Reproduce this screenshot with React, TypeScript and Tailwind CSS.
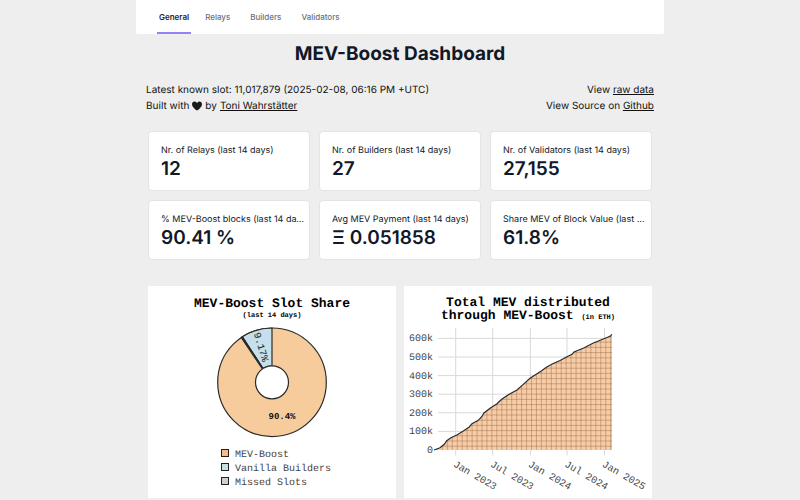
import React from "react";

const tabs = ["General", "Relays", "Builders", "Validators"];

const stats = [
  { label: "Nr. of Relays (last 14 days)", value: "12" },
  { label: "Nr. of Builders (last 14 days)", value: "27" },
  { label: "Nr. of Validators (last 14 days)", value: "27,155" },
  { label: "% MEV-Boost blocks (last 14 days)", value: "90.41 %" },
  { label: "Avg MEV Payment (last 14 days)", value: "Ξ 0.051858" },
  { label: "Share MEV of Block Value (last 14 days)", value: "61.8%" },
];

const mono = "'Courier New', 'Liberation Mono', monospace";

function SlotShare() {
  return (
    <svg viewBox="0 38 248 174" className="block w-full" fontFamily={mono} role="img" aria-label="MEV-Boost Slot Share">
      <g stroke="#2b2b2b" strokeWidth="1.2">
        <circle cx="124" cy="96.3" r="54.3" fill="#f7cc9c" />
        <path d="M94.4 50.8 L115 82.5 A16.5 16.5 0 0 1 124 79.8 L124 42 A54.3 54.3 0 0 0 94.4 50.8Z" fill="#c5dfeb" />
        <path d="M93.2 51.5 L114.5 83 L115 82.5 L94.4 50.8Z" fill="#222" />
        <circle cx="124" cy="96.3" r="16.5" fill="#fff" />
      </g>
      <text x="134" y="133" fontSize="9" fontWeight="700" textAnchor="middle" fill="#111">90.4%</text>
      <text transform="translate(113 61) rotate(73)" fontSize="10" y="3" textAnchor="middle" fill="#222">9.17%</text>
      <g fontSize="10" fill="#444">
        <rect x="73.5" y="163.5" width="7" height="7" fill="#f7bd85" stroke="#222" />
        <rect x="73.5" y="177.5" width="7" height="7" fill="#c9dfe8" stroke="#222" />
        <rect x="73.5" y="191.5" width="7" height="7" fill="#cfcfcf" stroke="#222" />
        <text x="87" y="171">MEV-Boost</text>
        <text x="87" y="185">Vanilla Builders</text>
        <text x="87" y="199">Missed Slots</text>
      </g>
    </svg>
  );
}

const curve =
  "M30 164 L36 161.7 L40.3 158.3 L42.7 154.7 L47 151.7 L53.3 148.7 L59.3 145 L65.3 141 L68 137.7 L74.3 134.3 L77.7 130.7 L80 127 L86 122.3 L92.7 118 L97.7 113.3 L104.3 108.7 L113 104 L119 98.6 L126 92.3 L137.7 84.7 L142 81.5 L147.7 78.3 L156 74.5 L163 70.7 L168 68.3 L170 66 L180.3 61.7 L189.3 57 L199.3 53 L206 50.3 L208 48.3";

const months = [
  { x: 51.7, label: "Jan 2023" },
  { x: 88.7, label: "Jul 2023" },
  { x: 126.4, label: "Jan 2024" },
  { x: 163, label: "Jul 2024" },
  { x: 200.5, label: "Jan 2025" },
];

function TotalMev() {
  return (
    <svg viewBox="0 38 248 174" className="block w-full" fontFamily={mono} role="img" aria-label="Total MEV distributed through MEV-Boost">
      <defs>
        <clipPath id="area"><path d={curve + " L208 164Z"} /></clipPath>
      </defs>
      {[1, 2, 3, 4, 5, 6].map((n) => (
        <path key={n} d={`M34 ${164 - n * 18.6}H208`} stroke="#d9d9d9" strokeWidth="1" />
      ))}
      {months.map((m) => (
        <path key={m.label} d={`M${m.x} 42V169.500`} stroke="#d9d9d9" strokeWidth="1" />
      ))}
      <path d={curve + " L208 164Z"} fill="#f6cda9" />
      <g clipPath="url(#area)" stroke="#a0683e" strokeOpacity="0.5" strokeWidth="0.9">
        {Array.from({ length: 37 }, (_, i) => (
          <path key={i} d={`M${28.5 + i * 4.95} 40V164`} />
        ))}
        {Array.from({ length: 24 }, (_, i) => (
          <path key={i} d={`M30 ${160.2 - i * 5.2}H208`} />
        ))}
      </g>
      <path d={curve} fill="none" stroke="#2b2b2b" strokeWidth="1.2" />
      <g fontSize="10" fill="#444" textAnchor="end">
        {[0, 1, 2, 3, 4, 5, 6].map((n) => (
          <text key={n} x="29" y={167 - n * 18.6}>{n === 0 ? "0" : `${n}00k`}</text>
        ))}
      </g>
      <g fontSize="10" fill="#444">
        {months.map((m) => (
          <text key={m.label} transform={`translate(${m.x - 3} 180) rotate(30)`}>{m.label}</text>
        ))}
      </g>
    </svg>
  );
}

export default function App() {
  return (
    <div className="min-h-screen bg-[#eeeeee] font-[Inter,sans-serif] text-[#111827] [text-rendering:geometricPrecision]">
      <div className="mx-auto w-[66%]">
        <nav className="flex h-[34px] gap-2 rounded-b-xs bg-white px-[21px]">
          {tabs.map((t, i) => (
            <button
              key={t}
              type="button"
              className={
                i === 0
                  ? "border-b-2 border-[#9085ee] px-[2px] pt-[2px] text-[8px] font-semibold text-[#1f2333]"
                  : "border-b-2 border-transparent px-[6px] pt-[2px] text-[8px] font-medium text-[#6b7280]"
              }
            >
              {t}
            </button>
          ))}
        </nav>
        <main className="px-[10px]">
          <h1 className="mt-[6px] text-center text-[19px] leading-[28px] font-bold">MEV-Boost Dashboard</h1>
          <div className="mt-[14px] flex justify-between text-[10px] leading-[16px] text-[#111]">
            <div>
              <p>Latest known slot: 11,017,879 (2025-02-08, 06:16 PM +UTC)</p>
              <p className="flex items-center gap-[3px]">
                Built with
                <svg viewBox="0 0 24 24" className="size-[10px]" fill="#1a1a1a" role="img" aria-label="love">
                  <path d="M12 23C7 19 0 14 0 7.500 0 0 9 -1 12 5 15 -1 24 0 24 7.500 24 14 17 19 12 23Z" />
                </svg>
                by <a href="#toni" className="underline">Toni Wahrstätter</a>
              </p>
            </div>
            <div className="text-right">
              <p>View <a href="#data" className="underline">raw data</a></p>
              <p>View Source on <a href="#github" className="underline">Github</a></p>
            </div>
          </div>
          <section className="mx-[2px] mt-[17px] grid grid-cols-3 gap-[9px]">
            {stats.map((s) => (
              <div key={s.label} className="h-[60px] min-w-0 rounded border border-[#e4e4e4] bg-white pt-[13px] pr-1 pl-3">
                <p className="truncate text-[9px] leading-[12px]">{s.label}</p>
                <p className="text-[19px] leading-[24px] font-semibold">{s.value}</p>
              </div>
            ))}
          </section>
          <section className="mx-[2px] mt-[26px] grid grid-cols-2 gap-2">
            <div className="bg-white">
              <h2 className="h-[38px] pt-[10px] text-center font-['Courier_New','Liberation_Mono',monospace] text-[13px] leading-[15px] font-bold text-black">
                MEV-Boost Slot Share
                <small className="block text-[7px] leading-[11px]">(last 14 days)</small>
              </h2>
              <SlotShare />
            </div>
            <div className="bg-white">
              <h2 className="h-[38px] pt-[10px] text-center font-['Courier_New','Liberation_Mono',monospace] text-[13px] leading-[13px] font-bold text-black">
                Total MEV distributed
                <br />
                through MEV-Boost <small className="text-[7px]">(in ETH)</small>
              </h2>
              <TotalMev />
            </div>
          </section>
        </main>
      </div>
    </div>
  );
}
